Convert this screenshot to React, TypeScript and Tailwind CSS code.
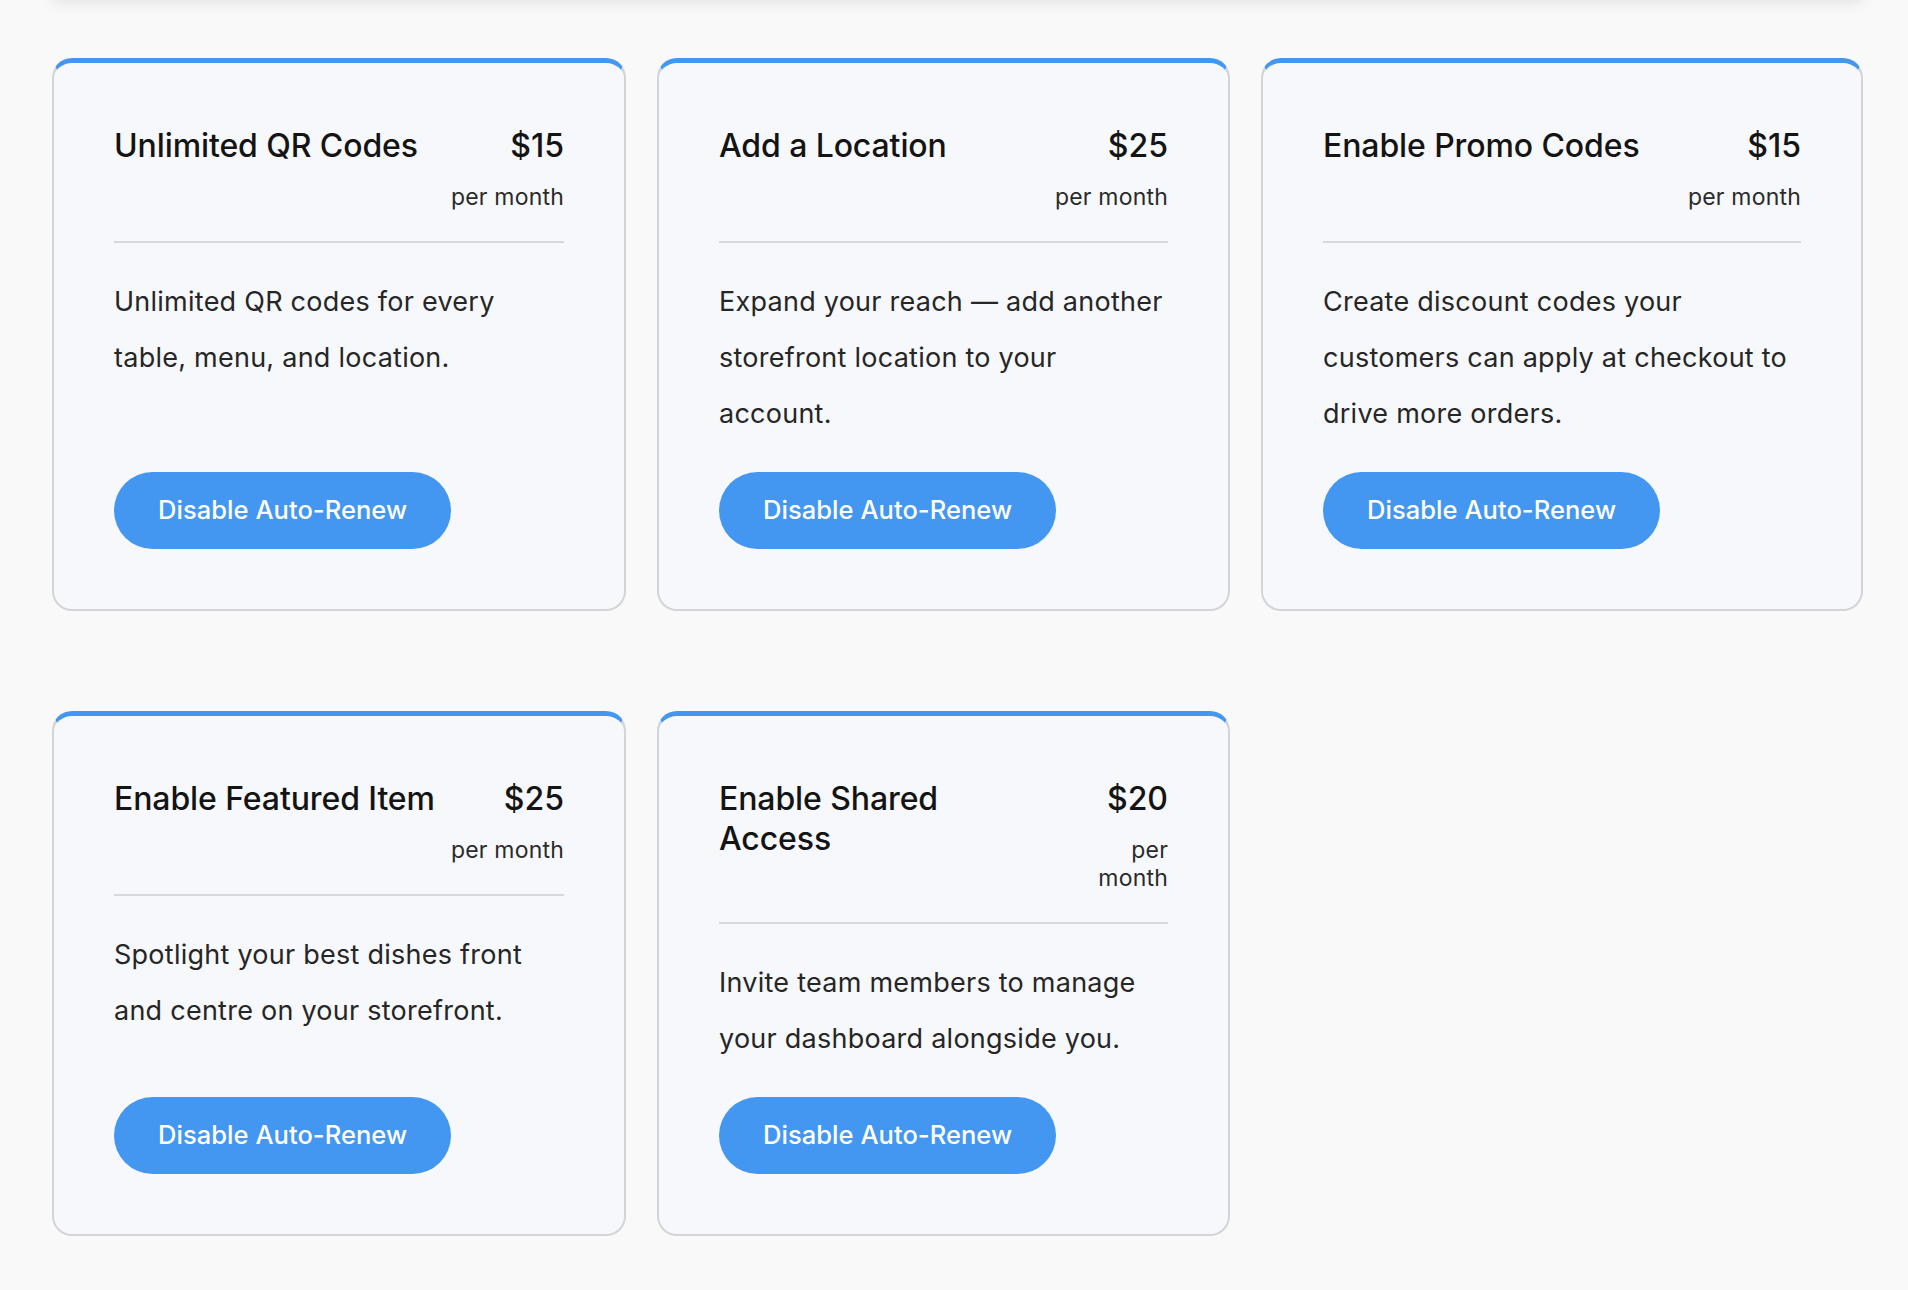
import React from 'react';

interface Addon {
  id: string;
  title: string;
  price: number;
  description: string;
}

const addons: Addon[] = [
  { id: 'qr', title: 'Unlimited QR Codes', price: 15, description: 'Unlimited QR codes for every table, menu, and location.' },
  { id: 'location', title: 'Add a Location', price: 25, description: 'Expand your reach — add another storefront location to your account.' },
  { id: 'promo', title: 'Enable Promo Codes', price: 15, description: 'Create discount codes your customers can apply at checkout to drive more orders.' },
  { id: 'featured', title: 'Enable Featured Item', price: 25, description: 'Spotlight your best dishes front and centre on your storefront.' },
  { id: 'shared', title: 'Enable Shared Access', price: 20, description: 'Invite team members to manage your dashboard alongside you.' },
];

const AddonCard: React.FC<{ addon: Addon }> = ({ addon }) => (
  <div className="flex flex-col rounded-[20px] border-2 border-t-[5px] border-[#d3d4d8] border-t-[#4497f0] bg-[#f7f8fc] p-[60px] pt-[63px]">
    <div className="flex items-start justify-between gap-2 border-b-2 border-[#d6d8dd] pb-[30px]">
      <h3 className="text-[32px] leading-[40px] font-medium tracking-[-0.1px] text-[#141414]">{addon.title}</h3>
      <div className="text-right">
        <div className="text-[32px] leading-[40px] font-medium text-[#141414]">${addon.price}</div>
        <div className="mt-[17px] text-[23px] leading-[28px] tracking-[0.2px] text-[#2b2b2b]">per month</div>
      </div>
    </div>
    <p className="mt-[31px] text-[27px] leading-[56px] tracking-[0.25px] text-[#262626]">{addon.description}</p>
    <div className="mt-auto pt-[30px]">
      <button className="h-[77px] rounded-full bg-[#4497f0] px-[44px] text-[25.5px] font-medium tracking-[0.05px] text-white">
        Disable Auto-Renew
      </button>
    </div>
  </div>
);

export default function App() {
  return (
    <div className="min-h-screen bg-[#f9f9fa] pl-[52px] pr-[45px] pb-[55px] font-['Inter',sans-serif]">
      {/* header panel sitting just above the viewport, only its shadow shows */}
      <div className="-mt-[40px] h-[40px] bg-[#f9f9fa] shadow-[0_3px_14px_rgba(0,0,0,0.09)]" />
      <div className="mt-[58px] grid grid-cols-[574px_573px_1fr] gap-x-[31px] gap-y-[100px]">
        {addons.map(a => (
          <AddonCard key={a.id} addon={a} />
        ))}
      </div>
    </div>
  );
}
